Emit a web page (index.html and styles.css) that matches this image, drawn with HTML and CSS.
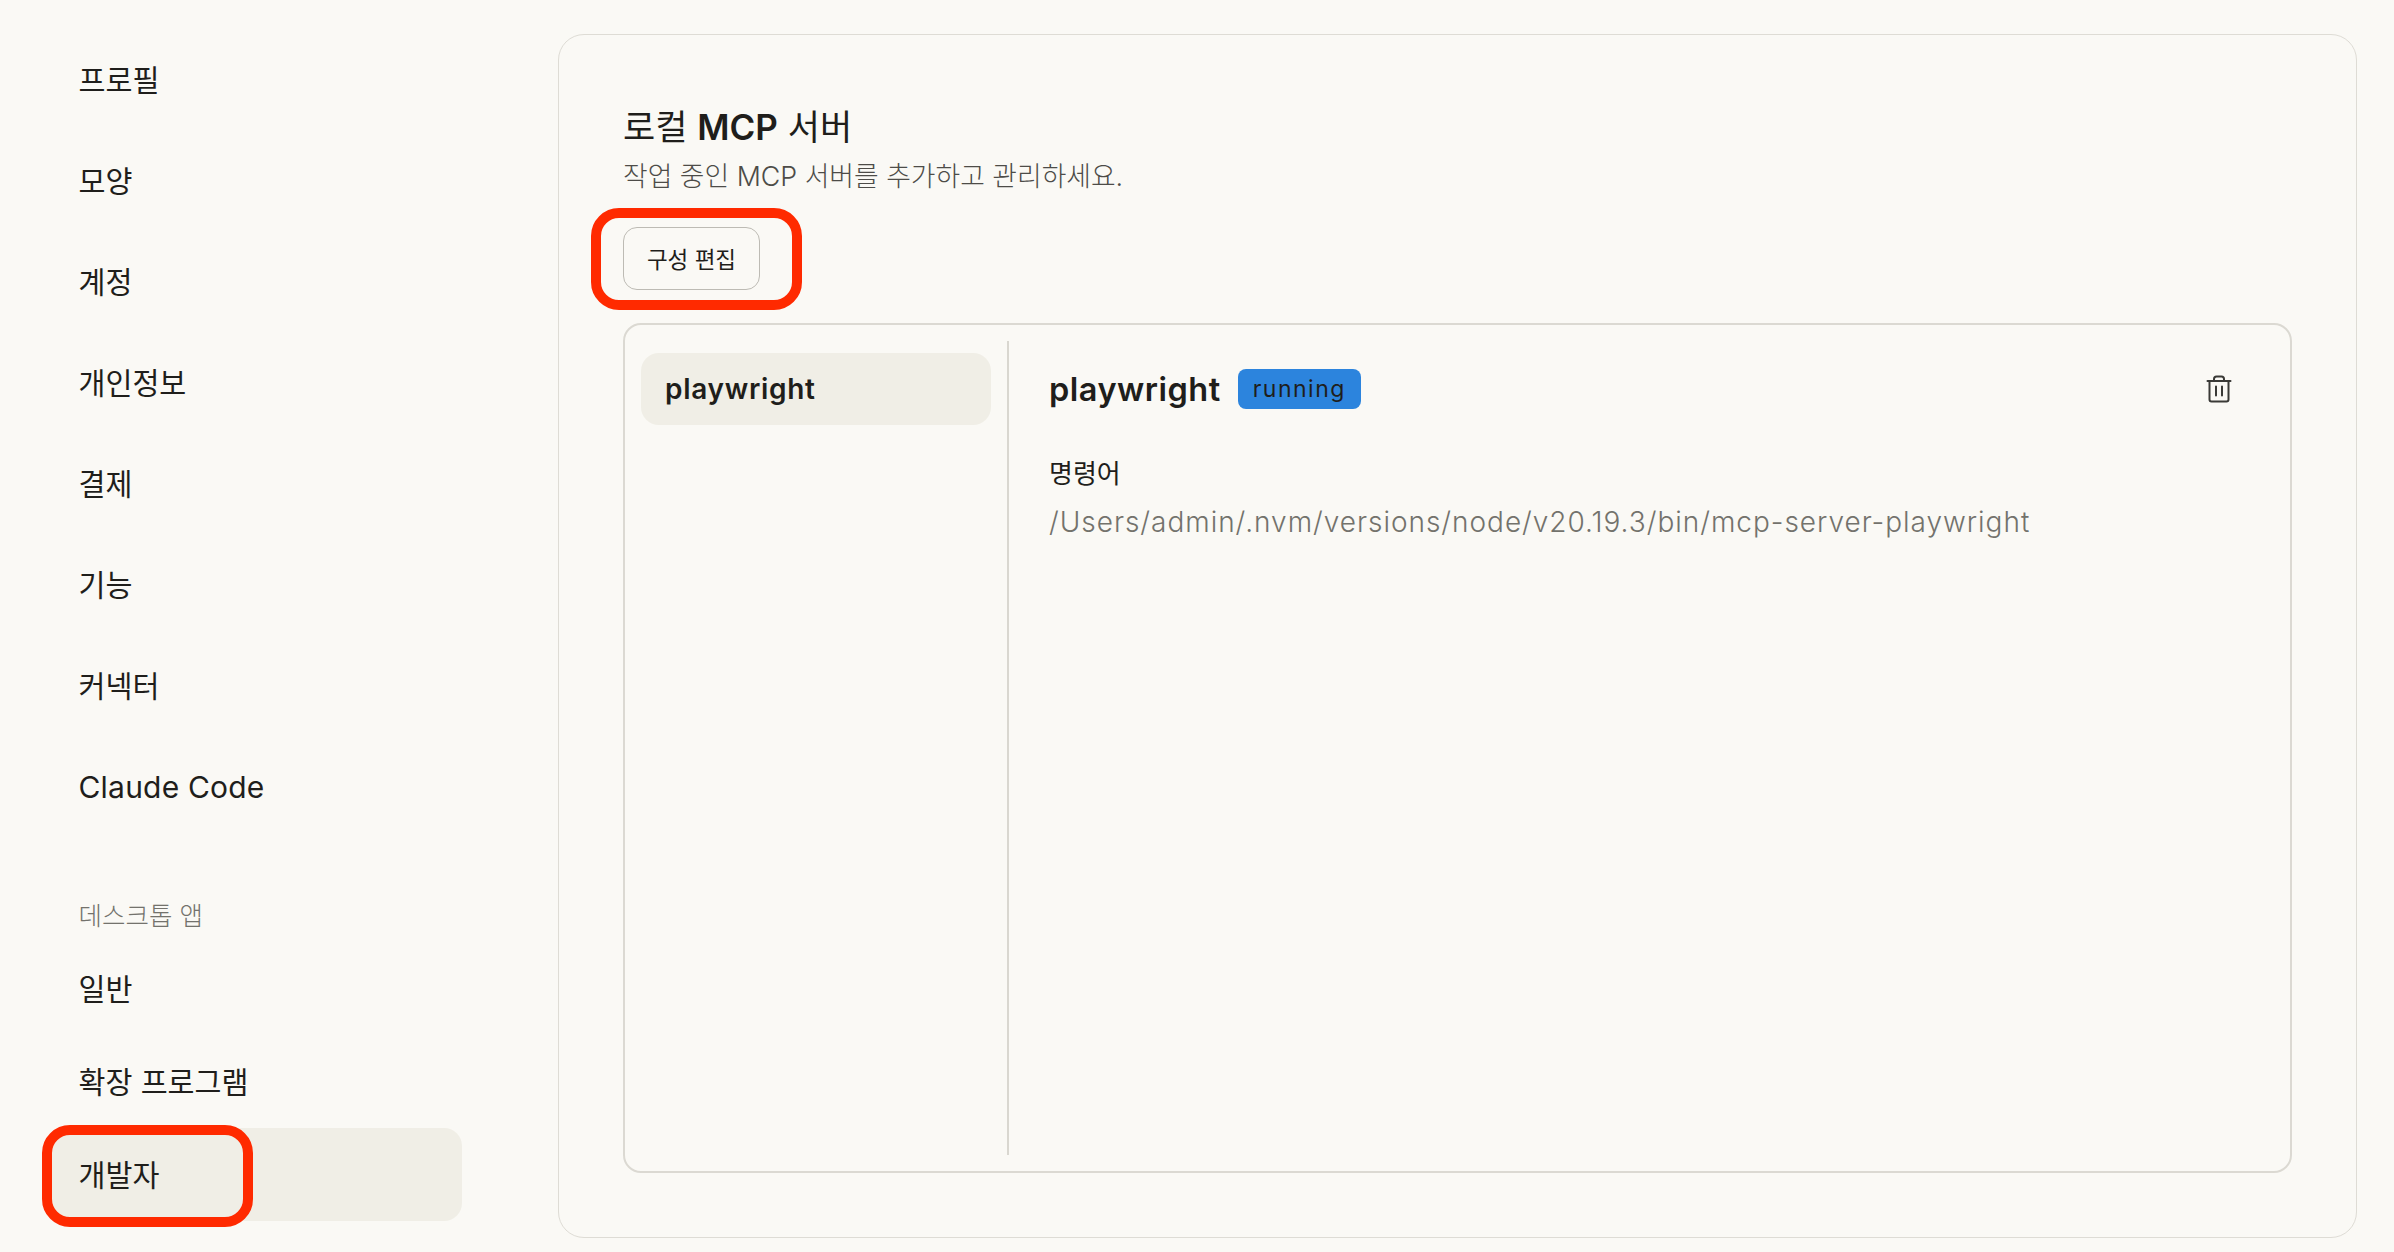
FILE: index.html
```html
<!DOCTYPE html>
<html lang="ko">
<head>
<meta charset="utf-8">
<title>설정</title>
<link rel="stylesheet" href="styles.css">
</head>
<body>
<div class="page">
  <aside class="sidebar">
    <nav class="nav-main">
      <a class="nav-item">프로필</a>
      <a class="nav-item">모양</a>
      <a class="nav-item">계정</a>
      <a class="nav-item">개인정보</a>
      <a class="nav-item">결제</a>
      <a class="nav-item">기능</a>
      <a class="nav-item">커넥터</a>
      <a class="nav-item nav-latin">Claude Code</a>
    </nav>
    <div class="nav-heading">데스크톱 앱</div>
    <nav class="nav-desktop">
      <a class="nav-item">일반</a>
      <a class="nav-item">확장 프로그램</a>
      <a class="nav-item active">개발자<span class="mark mark-nav"></span></a>
    </nav>
  </aside>
  <main class="card">
    <h1 class="title">로컬 <b>MCP</b> 서버</h1>
    <p class="subtitle">작업 중인 MCP 서버를 추가하고 관리하세요.</p>
    <div class="actions">
      <button class="btn">구성 편집<span class="mark mark-btn"></span></button>
    </div>
    <section class="panel">
      <div class="server-list">
        <div class="server-item">playwright</div>
      </div>
      <div class="divider"></div>
      <div class="detail">
        <div class="detail-head">
          <h2 class="server-name">playwright</h2>
          <span class="badge">running</span>
          <svg class="trash" width="26" height="28" viewBox="0 0 26 28" fill="none" stroke="#3a3a37" stroke-width="2" stroke-linecap="round" stroke-linejoin="round">
            <path d="M1.5 6h23"/>
            <path d="M3.5 6v18.5a2 2 0 0 0 2 2h15a2 2 0 0 0 2-2V6"/>
            <path d="M8 6V4a2.5 2.5 0 0 1 2.5-2.5h5A2.5 2.5 0 0 1 18 4v2"/>
            <path d="M10 11.5v9M16 11.5v9"/>
          </svg>
        </div>
        <div class="field-label">명령어</div>
        <div class="field-value">/Users/admin/.nvm/versions/node/v20.19.3/bin/mcp-server-playwright</div>
      </div>
    </section>
  </main>
</div>
</body>
</html>
```
FILE: styles.css
```css
* { box-sizing: border-box; }
html, body { margin: 0; height: 100%; }
body {
  background: #faf9f5;
  color: #1f1e1b;
  font-family: Inter, "Noto Sans CJK KR", sans-serif;
  overflow: hidden;
}
.page { display: flex; height: 1252px; }
.sidebar { width: 558px; flex: none; padding: 31.5px 96px 0 50px; }
.nav-main { display: flex; flex-direction: column; gap: 8px; }
.nav-desktop { display: flex; flex-direction: column; margin-top: 6px; }
.nav-desktop .nav-item { padding-bottom: 3px; }
.nav-item {
  position: relative;
  display: flex;
  align-items: center;
  height: 93px;
  padding-left: 28.5px;
  font-size: 29.3px;
  font-weight: 400;
  border-radius: 18px;
}
.nav-latin { font-size: 30px; letter-spacing: 0.2px; padding-top: 4px; }
.nav-item.active { background: #f0eee6; }
.nav-heading {
  margin-top: 64.5px;
  height: 40px;
  line-height: 40px;
  padding-left: 28.5px;
  font-size: 25.5px;
  font-weight: 300;
  color: #73726c;
}
.mark {
  position: absolute;
  border: 10px solid #ff2a00;
  border-radius: 28px;
  pointer-events: none;
}
.mark-nav { left: -8px; top: -3px; width: 211px; height: 102px; }
.mark-btn { left: -33px; top: -20px; width: 211px; height: 102px; }
.card {
  width: 1799px;
  height: 1204px;
  margin-top: 34px;
  padding: 70px 64px 0;
  border: 1.5px solid #dedcd5;
  border-radius: 26px;
  display: flex;
  flex-direction: column;
}
.title { margin: 0; font-size: 35px; font-weight: 400; line-height: 44px; }
.title b { font-weight: 600; }
.subtitle { margin: 5px 0 0; font-size: 26.8px; font-weight: 300; line-height: 44px; color: #4d4c48; }
.actions { margin-top: 29px; display: flex; }
.btn {
  position: relative;
  width: 137px;
  height: 63px;
  padding: 0 0 2px;
  background: transparent;
  border: 1px solid #bdbbb4;
  border-radius: 14px;
  font: 400 22.5px Inter, "Noto Sans CJK KR", sans-serif;
  color: #1f1e1b;
}
.panel {
  margin-top: 33px;
  width: 1669px;
  height: 850px;
  border: 2px solid #dbd9d2;
  border-radius: 18px;
  padding: 16px;
  display: flex;
}
.server-list { width: 351px; flex: none; padding-top: 12px; }
.server-item {
  height: 72px;
  width: 350px;
  display: flex;
  align-items: center;
  padding-left: 24px;
  background: #f0eee6;
  border-radius: 18px;
  font-size: 28px;
  font-weight: 600;
  letter-spacing: 0.7px;
}
.divider { width: 2px; flex: none; margin-left: 15px; background: #d9d7d0; }
.detail { flex: 1; padding: 28px 0 0 40px; }
.detail-head { display: flex; align-items: center; height: 40px; }
.server-name { margin: 0; font-size: 32.5px; font-weight: 600; letter-spacing: 0.5px; }
.badge {
  margin-left: 17px;
  width: 123px;
  height: 40px;
  display: flex;
  align-items: center;
  justify-content: center;
  background: #2c84dd;
  border-radius: 8px;
  font-size: 23px;
  font-weight: 400;
  letter-spacing: 1.5px;
}
.trash { margin-left: auto; margin-right: 42px; }
.field-label { margin-top: 45px; font-size: 26px; font-weight: 400; line-height: 40px; }
.field-value { margin-top: 8px; font-size: 28px; font-weight: 300; line-height: 40px; letter-spacing: 0.97px; color: #73726c; white-space: nowrap; }
```
